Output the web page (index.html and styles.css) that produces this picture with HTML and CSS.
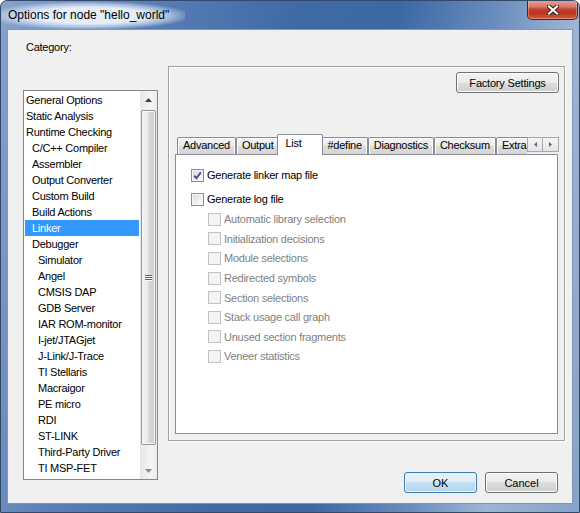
FILE: index.html
```html
<!DOCTYPE html>
<html>
<head>
<meta charset="utf-8">
<link rel="stylesheet" href="styles.css">
</head>
<body>
<div class="window">
  <div class="titlebar">
    <span class="title">Options for node "hello_world"</span>
    <div class="close">
      <svg width="12" height="10" viewBox="0 0 12 10"><path d="M2 1.5 L10 8.5 M10 1.5 L2 8.5" stroke="#3b1a15" stroke-width="4.2" stroke-linecap="square"/><path d="M2 1.5 L10 8.5 M10 1.5 L2 8.5" stroke="#ffffff" stroke-width="2.2" stroke-linecap="square"/></svg>
    </div>
  </div>
  <div class="client">
    <div class="left">
      <div class="cat-label">Category:</div>
      <div class="listbox">
        <ul class="items">
          <li class="l0">General Options</li>
          <li class="l0">Static Analysis</li>
          <li class="l0">Runtime Checking</li>
          <li class="l1">C/C++ Compiler</li>
          <li class="l1">Assembler</li>
          <li class="l1">Output Converter</li>
          <li class="l1">Custom Build</li>
          <li class="l1">Build Actions</li>
          <li class="l1 sel">Linker</li>
          <li class="l1">Debugger</li>
          <li class="l2">Simulator</li>
          <li class="l2">Angel</li>
          <li class="l2">CMSIS DAP</li>
          <li class="l2">GDB Server</li>
          <li class="l2">IAR ROM-monitor</li>
          <li class="l2">I-jet/JTAGjet</li>
          <li class="l2">J-Link/J-Trace</li>
          <li class="l2">TI Stellaris</li>
          <li class="l2">Macraigor</li>
          <li class="l2">PE micro</li>
          <li class="l2">RDI</li>
          <li class="l2">ST-LINK</li>
          <li class="l2">Third-Party Driver</li>
          <li class="l2">TI MSP-FET</li>
        </ul>
        <div class="vscroll">
          <div class="sb-btn"><svg width="7" height="4" viewBox="0 0 7 4"><path d="M0 4 L3.5 0 L7 4Z" fill="#3e3e3e"/></svg></div>
          <div class="sb-track"><div class="thumb"><span class="grip"></span></div></div>
          <div class="sb-btn"><svg width="7" height="4" viewBox="0 0 7 4"><path d="M0 0 L3.5 4 L7 0Z" fill="#8a8a8a"/></svg></div>
        </div>
      </div>
    </div>
    <div class="right">
      <div class="group">
        <div class="factory-row"><div class="btn">Factory Settings</div></div>
        <div class="tabbar">
          <div class="tabs">
            <div class="tab">Advanced</div>
            <div class="tab">Output</div>
            <div class="tab sel">List</div>
            <div class="tab">#define</div>
            <div class="tab">Diagnostics</div>
            <div class="tab">Checksum</div>
            <div class="tab">Extra Options</div>
          </div>
          <div class="tabscroll">
            <span class="ts-btn"><svg width="3" height="5" viewBox="0 0 3 5"><path d="M3 0 L0 2.5 L3 5Z" fill="#56668c"/></svg></span>
            <span class="ts-btn"><svg width="3" height="5" viewBox="0 0 3 5"><path d="M0 0 L3 2.5 L0 5Z" fill="#56668c"/></svg></span>
          </div>
        </div>
        <div class="panel">
          <div class="row main"><span class="chk on"><svg width="11" height="11" viewBox="0 0 11 11"><path d="M2.2 5.6 L4.4 8.2 L8.8 2.4" fill="none" stroke="#3d4f8f" stroke-width="1.9"/></svg></span><span>Generate linker map file</span></div>
          <div class="row main second"><span class="chk"></span><span>Generate log file</span></div>
          <div class="row sub"><span class="chk off"></span><span>Automatic library selection</span></div>
          <div class="row sub"><span class="chk off"></span><span>Initialization decisions</span></div>
          <div class="row sub"><span class="chk off"></span><span>Module selections</span></div>
          <div class="row sub"><span class="chk off"></span><span>Redirected symbols</span></div>
          <div class="row sub"><span class="chk off"></span><span>Section selections</span></div>
          <div class="row sub"><span class="chk off"></span><span>Stack usage call graph</span></div>
          <div class="row sub"><span class="chk off"></span><span>Unused section fragments</span></div>
          <div class="row sub"><span class="chk off"></span><span>Veneer statistics</span></div>
        </div>
      </div>
      <div class="footer">
        <div class="btn default">OK</div>
        <div class="btn">Cancel</div>
      </div>
    </div>
  </div>
</div>
</body>
</html>
```
FILE: styles.css
```css
html, body {
  margin: 0;
  padding: 0;
  background: #ffffff;
}
body {
  width: 580px;
  height: 513px;
  overflow: hidden;
  font-family: "Liberation Sans", Arial, sans-serif;
  font-size: 11px;
  letter-spacing: -0.25px;
  color: #000;
}
.window {
  width: 580px;
  height: 513px;
  box-sizing: border-box;
  border: 1px solid #34496a;
  border-radius: 7px 7px 0 0;
  display: flex;
  flex-direction: column;
  background: linear-gradient(100deg, #86a3cc 0%, #5b80b6 20%, #3f6aa6 45%, #3c68a4 60%, #6c8ebe 75%, #9db5d4 86%, #86a2c8 100%);
  overflow: hidden;
}
.titlebar {
  height: 28px;
  display: flex;
  align-items: flex-start;
  flex: none;
}
.title {
  font-size: 12px;
  letter-spacing: 0;
  line-height: 28px;
  padding: 0 16px 0 7px;
  color: #000;
  background: radial-gradient(ellipse 56% 52% at 48% 52%, rgba(236,243,251,0.95) 55%, rgba(220,232,246,0.6) 78%, rgba(200,220,240,0) 100%);
}
.close {
  margin-left: auto;
  margin-right: 1px;
  margin-top: -1px;
  width: 51px;
  height: 20px;
  box-sizing: border-box;
  border: 1px solid #4d241f;
  border-top: none;
  border-radius: 0 0 5px 5px;
  background: linear-gradient(180deg, #e9a697 0%, #d8786a 35%, #c0412c 50%, #b9341f 70%, #d4603f 100%);
  box-shadow: inset 0 0 0 1px rgba(255,220,210,0.35);
  display: flex;
  align-items: center;
  justify-content: center;
}
.client {
  flex: 1;
  margin: 0 6px 8px 6px;
  border: 1px solid #8397b5;
  background: #f0f0f0;
  display: flex;
  padding: 9px 7px 0 15px;
}
.left {
  width: 135px;
  display: flex;
  flex-direction: column;
}
.cat-label {
  line-height: 16px;
  height: 16px;
  padding-left: 3px;
}
.listbox {
  margin-top: 35px;
  height: 390px;
  box-sizing: border-box;
  border: 1px solid #828790;
  background: #fff;
  display: flex;
}
.items {
  list-style: none;
  margin: 0;
  padding: 1px 1px 0 1px;
  flex: 1;
}
.items li {
  height: 16px;
  line-height: 16px;
  white-space: nowrap;
}
.items .l0 { padding-left: 1px; }
.items .l1 { padding-left: 7px; }
.items .l2 { padding-left: 13px; }
.items .sel {
  background: #3399ff;
  color: #fff;
}
.vscroll {
  width: 17px;
  display: flex;
  flex-direction: column;
  background: linear-gradient(90deg, #e6e6e6, #f4f4f4 60%, #ececec);
}
.sb-btn {
  height: 17px;
  display: flex;
  align-items: center;
  justify-content: center;
}
.sb-track {
  flex: 1;
  display: flex;
  flex-direction: column;
}
.thumb {
  margin: 2px 1px 0 1px;
  height: 335px;
  box-sizing: border-box;
  border: 1px solid #959595;
  border-radius: 2px;
  background: linear-gradient(90deg, #f4f4f4 0%, #e8e8e8 45%, #d6d6d6 55%, #cfcfcf 100%);
  box-shadow: inset 0 0 0 1px #f9f9f9;
  display: flex;
  align-items: center;
  justify-content: center;
}
.grip {
  width: 7px;
  height: 6px;
  background: repeating-linear-gradient(180deg, #5f5f5f 0 1px, #fbfbfb 1px 2px);
}
.right {
  margin-left: 10px;
  width: 397px;
  display: flex;
  flex-direction: column;
  padding-top: 27px;
}
.group {
  height: 375px;
  box-sizing: border-box;
  border: 1px solid #a0a0a0;
  box-shadow: inset 1px 1px 0 #ffffff, 1px 1px 0 #ffffff;
  padding: 5px 5px 6px 6px;
  display: flex;
  flex-direction: column;
}
.factory-row {
  display: flex;
  justify-content: flex-end;
}
.btn {
  height: 21px;
  box-sizing: border-box;
  border: 1px solid #707070;
  border-radius: 3px;
  background: linear-gradient(180deg, #f2f2f2 0%, #ebebeb 50%, #dddddd 50%, #cfcfcf 100%);
  box-shadow: inset 0 0 0 1px #fbfbfb;
  display: flex;
  align-items: center;
  justify-content: center;
  letter-spacing: 0;
}
.factory-row .btn {
  width: 103px;
  letter-spacing: -0.2px;
}
.tabbar {
  margin-top: 41px;
  margin-left: 2px;
  height: 20px;
  display: flex;
  position: relative;
  z-index: 1;
}
.tabs {
  width: 350px;
  height: 21px;
  display: flex;
  align-items: flex-start;
  overflow: hidden;
  padding-left: 2px;
  margin-left: -2px;
}
.tab {
  flex: none;
  margin-top: 3px;
  height: 17px;
  box-sizing: border-box;
  padding: 0 5px;
  border: 1px solid #898c95;
  border-bottom: none;
  border-radius: 2px 2px 0 0;
  background: linear-gradient(180deg, #f3f3f3 0%, #ebebeb 50%, #dddddd 50%, #d5d5d5 100%);
  box-shadow: inset 1px 1px 0 #fcfcfc, inset -1px 0 0 #fcfcfc;
  line-height: 15px;
  white-space: nowrap;
}
.tab.sel {
  margin: 0 -2px;
  height: 21px;
  width: 46px;
  padding: 0 0 0 7px;
  background: #ffffff;
  box-shadow: none;
  position: relative;
  z-index: 2;
  line-height: 17px;
}
.tabscroll {
  display: flex;
  margin-top: 3px;
  height: 15px;
}
.ts-btn {
  width: 16px;
  height: 15px;
  box-sizing: border-box;
  border: 1px solid #a8a8a8;
  background: linear-gradient(180deg, #f4f4f4, #e4e4e4);
  display: flex;
  align-items: center;
  justify-content: center;
}
.ts-btn + .ts-btn {
  border-left: none;
}
.panel {
  flex: 1;
  margin-right: 1px;
  border: 1px solid #898c95;
  background: #ffffff;
  padding: 8px 0 0 15px;
}
.row {
  display: flex;
  align-items: center;
  white-space: nowrap;
}
.row.main {
  height: 24px;
}
.row.second {
  height: 24px;
  margin-bottom: -1.5px;
}
.row.sub {
  height: 19.6px;
  padding-left: 17px;
  color: #7f7f7f;
}
.chk {
  width: 13px;
  height: 13px;
  box-sizing: border-box;
  flex: none;
  margin-right: 3px;
  border: 1px solid #8e8f8f;
  background: linear-gradient(135deg, #d8d8d8 0%, #f0f0f0 60%, #fcfcfc 100%);
  box-shadow: inset 0 0 0 1px #f4f4f4;
  display: flex;
  align-items: center;
  justify-content: center;
}
.chk.off {
  border-color: #c2c2c2;
  background: #f4f4f4;
  box-shadow: none;
}
.footer {
  margin-top: 31px;
  display: flex;
  justify-content: flex-end;
  gap: 8px;
  padding-right: 7px;
}
.footer .btn {
  width: 73px;
}
.btn.default {
  border-color: #3c7fb1;
  background: linear-gradient(180deg, #eaf5fc 0%, #dcecf8 50%, #c6e0f2 50%, #b5d6ee 100%);
  box-shadow: inset 0 0 0 1px #e8f4fc;
}
```
